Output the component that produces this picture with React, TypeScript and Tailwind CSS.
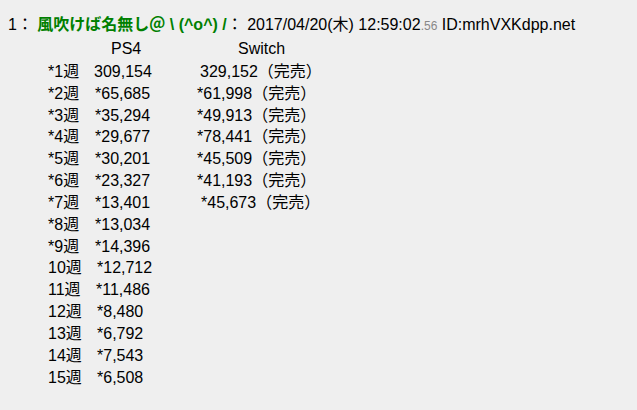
import React from "react";

type Row = {
  week: string;
  ps4: string;
  ps4Pad: string;
  sw?: string;
  swPad?: string;
};

const rows: Row[] = [
  { week: "*1週", ps4: "309,154", ps4Pad: "ml-0", sw: "329,152", swPad: "ml-[3px]" },
  { week: "*2週", ps4: "*65,685", ps4Pad: "ml-[1px]", sw: "*61,998", swPad: "ml-0" },
  { week: "*3週", ps4: "*35,294", ps4Pad: "ml-[1px]", sw: "*49,913", swPad: "ml-0" },
  { week: "*4週", ps4: "*29,677", ps4Pad: "ml-[1px]", sw: "*78,441", swPad: "ml-0" },
  { week: "*5週", ps4: "*30,201", ps4Pad: "ml-[1px]", sw: "*45,509", swPad: "ml-0" },
  { week: "*6週", ps4: "*23,327", ps4Pad: "ml-[1px]", sw: "*41,193", swPad: "ml-0" },
  { week: "*7週", ps4: "*13,401", ps4Pad: "ml-[1px]", sw: "*45,673", swPad: "ml-[4px]" },
  { week: "*8週", ps4: "*13,034", ps4Pad: "ml-[1px]" },
  { week: "*9週", ps4: "*14,396", ps4Pad: "ml-[1px]" },
  { week: "10週", ps4: "*12,712", ps4Pad: "ml-[3px]" },
  { week: "11週", ps4: "*11,486", ps4Pad: "ml-[2px]" },
  { week: "12週", ps4: "*8,480", ps4Pad: "ml-[3px]" },
  { week: "13週", ps4: "*6,792", ps4Pad: "ml-[3px]" },
  { week: "14週", ps4: "*7,543", ps4Pad: "ml-[3px]" },
  { week: "15週", ps4: "*6,508", ps4Pad: "ml-[3px]" },
];

export default function App() {
  return (
    <div className="w-[637px] h-[410px] bg-[#efefef] text-black text-[16px] font-['Liberation_Sans','Noto_Sans_CJK_JP',sans-serif] pt-[14px] px-[8px] overflow-hidden">
      {/* post header */}
      <div className="h-[22px] leading-[22px] whitespace-pre">
        <span>1：</span>
        <span className="text-[#008000] font-bold"> 風吹けば名無し＠ \ (^o^) /</span>
        <span>： 2017/04/20(木) 12:59:02</span>
        <span className="text-[#888888] text-[12px]">.56</span>
        <span> ID:mrhVXKdpp.net</span>
      </div>

      {/* post body */}
      <div className="mt-[2px] leading-[21.85px]">
        <div className="flex pl-[86px]">
          <span className="ml-[17px] w-[103px]">PS4</span>
          <span className="ml-[24px]">Switch</span>
        </div>
        <div className="mt-[1px]">
          {rows.map((r) => (
            <div key={r.week} className="flex pl-[40px] whitespace-pre">
              <span className="w-[46px] shrink-0">{r.week}</span>
              <span className="w-[103px] shrink-0">
                <span className={r.ps4Pad}>{r.ps4}</span>
              </span>
              {r.sw && (
                <span className={r.swPad}>
                  {r.sw}（完売）
                </span>
              )}
            </div>
          ))}
        </div>
      </div>
    </div>
  );
}
